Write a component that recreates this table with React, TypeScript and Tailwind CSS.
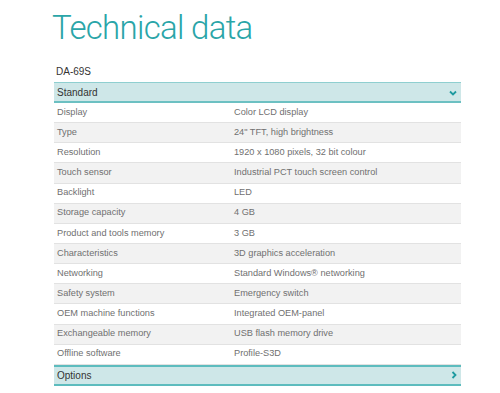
const rows: [string, string][] = [
  ["Display", "Color LCD display"],
  ["Type", "24\" TFT, high brightness"],
  ["Resolution", "1920 x 1080 pixels, 32 bit colour"],
  ["Touch sensor", "Industrial PCT touch screen control"],
  ["Backlight", "LED"],
  ["Storage capacity", "4 GB"],
  ["Product and tools memory", "3 GB"],
  ["Characteristics", "3D graphics acceleration"],
  ["Networking", "Standard Windows® networking"],
  ["Safety system", "Emergency switch"],
  ["OEM machine functions", "Integrated OEM-panel"],
  ["Exchangeable memory", "USB flash memory drive"],
  ["Offline software", "Profile-S3D"],
];

const App = () => {
  return (
    <div className="w-[500px] h-[393px] bg-white overflow-hidden font-['Liberation_Sans',Arial,sans-serif]">
      <div className="ml-[54px] w-[407px]">
        <h1 className="font-['Roboto',sans-serif] font-light text-[33px] leading-none text-[#2aa5a8] pt-[11px] -ml-[2px] tracking-[-0.7px]">
          Technical data
        </h1>
        <div className="mt-[23px] text-[10px] text-[#333] leading-none pl-[2px]">DA-69S</div>

        <div className="mt-[5px] h-[21px] bg-[#cee7e8] border-t border-[#8fcfd0] border-b-2 border-b-[#6cc0c2] flex items-center justify-between pl-[3px] pr-[4px]">
          <span className="text-[10px] text-[#333]">Standard</span>
          <svg width="8" height="6" viewBox="0 0 8 6" className="mt-[1px]">
            <path d="M1 1.5 L4 4.5 L7 1.5" fill="none" stroke="#1e9aa0" strokeWidth="1.8" />
          </svg>
        </div>

        <div>
          {rows.map(([k, v], i) => (
            <div
              key={k}
              className={
                i % 2 === 1
                  ? "h-[20.15px] flex items-center bg-[#f2f2f2] border-b border-[#e2e2e2] text-[9.2px] text-[#707070]"
                  : "h-[20.15px] flex items-center bg-white border-b border-[#e2e2e2] text-[9.2px] text-[#707070]"
              }
            >
              <span className="w-[180px] pl-[3px]">{k}</span>
              <span>{v}</span>
            </div>
          ))}
        </div>

        <div className="h-[21px] bg-[#cee7e8] border-t-2 border-[#5dbcbe] border-b-2 border-b-[#5dbcbe] flex items-center justify-between pl-[3px] pr-[4px]">
          <span className="text-[10px] text-[#333]">Options</span>
          <svg width="6" height="8" viewBox="0 0 6 8">
            <path d="M1.5 1 L4.5 4 L1.5 7" fill="none" stroke="#1e9aa0" strokeWidth="1.8" />
          </svg>
        </div>
      </div>
    </div>
  );
};

export default App;
